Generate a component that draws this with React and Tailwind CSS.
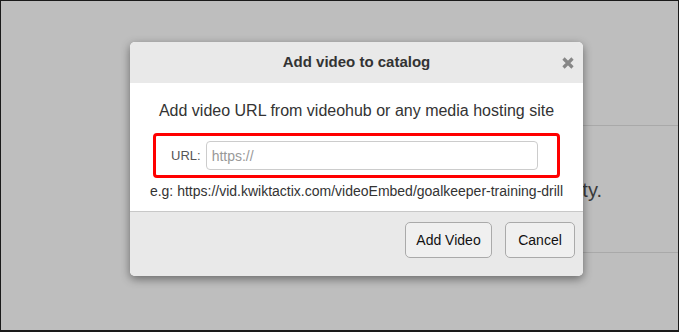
export default function App() {
  return (
    <div
      className="relative w-[679px] h-[332px] overflow-hidden bg-[#bebebe] border-t border-l border-r border-b-2 border-[#1a1a1a]"
      style={{ fontFamily: '"Liberation Sans", Arial, sans-serif' }}
    >
      {/* page behind the overlay */}
      <div className="pt-[124px] pl-[300px]">
        <div className="h-[128px] border-t border-b border-[#a9a9a9] flex justify-end pr-[76px] pt-[53px]">
          <span className="text-[20px] leading-[22px] text-[#3a3a3a]">Catalog is empty.</span>
        </div>
      </div>

      {/* modal */}
      <div className="absolute left-[129px] top-[41px] w-[453px] rounded-[5px] overflow-hidden bg-white shadow-[0_3px_10px_rgba(0,0,0,0.45)]">
        <div className="relative h-[41px] bg-[#e9e9e9] flex items-center justify-center">
          <h3 className="text-[15px] font-bold text-[#333]">Add video to catalog</h3>
          <svg className="absolute right-[9px] top-[15px]" width="12" height="12" viewBox="0 0 12 12">
            <path d="M1.5 1.5L10.5 10.5M10.5 1.5L1.5 10.5" stroke="#878787" strokeWidth="3.2" strokeLinecap="butt" />
          </svg>
        </div>

        <div className="h-[128px] pt-[19px]">
          <p className="text-center text-[16px] leading-[18px] text-[#333]">
            Add video URL from videohub or any media hosting site
          </p>
          <div className="mt-[13px] mx-[23px] h-[45px] border-[3px] border-[#ff0000] rounded-[4px] flex items-center pl-[15px] pr-[19px]">
            <label className="text-[13px] text-[#555] mr-[5px]">URL:</label>
            <input
              type="text"
              placeholder="https://"
              className="flex-1 h-[29px] border border-[#cccccc] rounded-[4px] px-[5px] text-[14px] text-[#333] placeholder:text-[#999] outline-none"
            />
          </div>
          <p className="mt-[5px] text-center text-[14px] leading-[16px] text-[#333] whitespace-nowrap">
            e.g: https://vid.kwiktactix.com/videoEmbed/goalkeeper-training-drill
          </p>
        </div>

        <div className="h-[65px] bg-[#e9e9e9] border-t border-[#c8c8c8] flex justify-end items-start gap-[13px] pt-[10px] pr-[8px]">
          <button className="w-[87px] h-[36px] rounded-[5px] border border-[#aaaaaa] bg-[#f0f0f0] text-[14px] text-[#111]">
            Add Video
          </button>
          <button className="w-[70px] h-[36px] rounded-[5px] border border-[#aaaaaa] bg-[#f0f0f0] text-[14px] text-[#111]">
            Cancel
          </button>
        </div>
      </div>
    </div>
  )
}
